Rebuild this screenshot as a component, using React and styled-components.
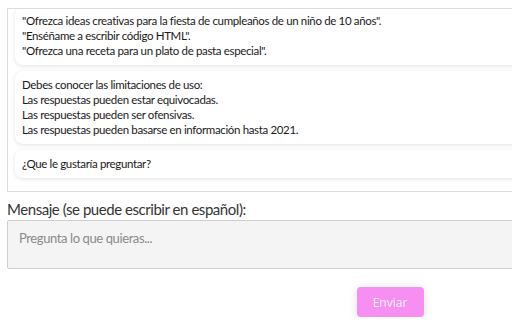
import React from "react";
import styled, { createGlobalStyle } from "styled-components";

const GlobalStyle = createGlobalStyle`
  body {
    margin: 0;
    overflow: hidden;
    background: #fff;
    font-family: "Lato", "Liberation Sans", sans-serif;
  }
`;

const Page = styled.div`
  width: 780px;
  padding: 0 7px;
  box-sizing: border-box;
`;

const ChatBox = styled.div`
  margin-top: 8px;
  height: 184px;
  border: 1px solid #dcdcdc;
  box-sizing: border-box;
  overflow: hidden;
  display: flex;
  flex-direction: column;
  justify-content: flex-end;
  gap: 6px;
  padding: 0 8px 13px 7px;
`;

const Bubble = styled.div`
  flex-shrink: 0;
  background: #fff;
  border-radius: 8px;
  box-shadow: 0 1px 4px rgba(0, 0, 0, 0.12);
  padding: 6px 7px 7px;
  font-size: 11.5px;
  letter-spacing: -0.35px;
  line-height: 15px;
  color: #1a1a1a;
`;

const Label = styled.label`
  display: block;
  margin-top: 8px;
  font-size: 15px;
  letter-spacing: -0.45px;
  line-height: 19px;
  color: #353535;
`;

const Input = styled.textarea`
  display: block;
  width: 100%;
  height: 49px;
  margin-top: 1px;
  box-sizing: border-box;
  background: #f4f4f4;
  border: 1px solid #cfcfcf;
  border-radius: 2px;
  padding: 9px 11px;
  font-family: inherit;
  font-size: 13px;
  letter-spacing: -0.4px;
  resize: none;
  outline: none;

  &::placeholder {
    color: #8a8a8a;
  }
`;

const Actions = styled.div`
  display: flex;
  justify-content: center;
  margin-top: 18px;
`;

const SendButton = styled.button`
  width: 67px;
  height: 30px;
  border: none;
  border-radius: 4px;
  background: #f78ef2;
  color: #fff3fd;
  font-family: "Open Sans", sans-serif;
  font-size: 12px;
  box-shadow: 0 2px 8px rgba(0, 0, 0, 0.12);
  cursor: pointer;
`;

const messages = [
  [
    "\"Ofrezca ideas creativas para la fiesta de cumpleaños de un niño de 10 años\".",
    "\"Enséñame a escribir código HTML\".",
    "\"Ofrezca una receta para un plato de pasta especial\".",
  ],
  [
    "Debes conocer las limitaciones de uso:",
    "Las respuestas pueden estar equivocadas.",
    "Las respuestas pueden ser ofensivas.",
    "Las respuestas pueden basarse en información hasta 2021.",
  ],
  ["¿Que le gustaría preguntar?"],
];

export default function App() {
  return (
    <Page>
      <GlobalStyle />
      <ChatBox>
        {messages.map((lines, i) => (
          <Bubble key={i}>
            {lines.map((line) => (
              <div key={line}>{line}</div>
            ))}
          </Bubble>
        ))}
      </ChatBox>
      <Label>Mensaje (se puede escribir en español):</Label>
      <Input placeholder="Pregunta lo que quieras..." />
      <Actions>
        <SendButton>Enviar</SendButton>
      </Actions>
    </Page>
  );
}
